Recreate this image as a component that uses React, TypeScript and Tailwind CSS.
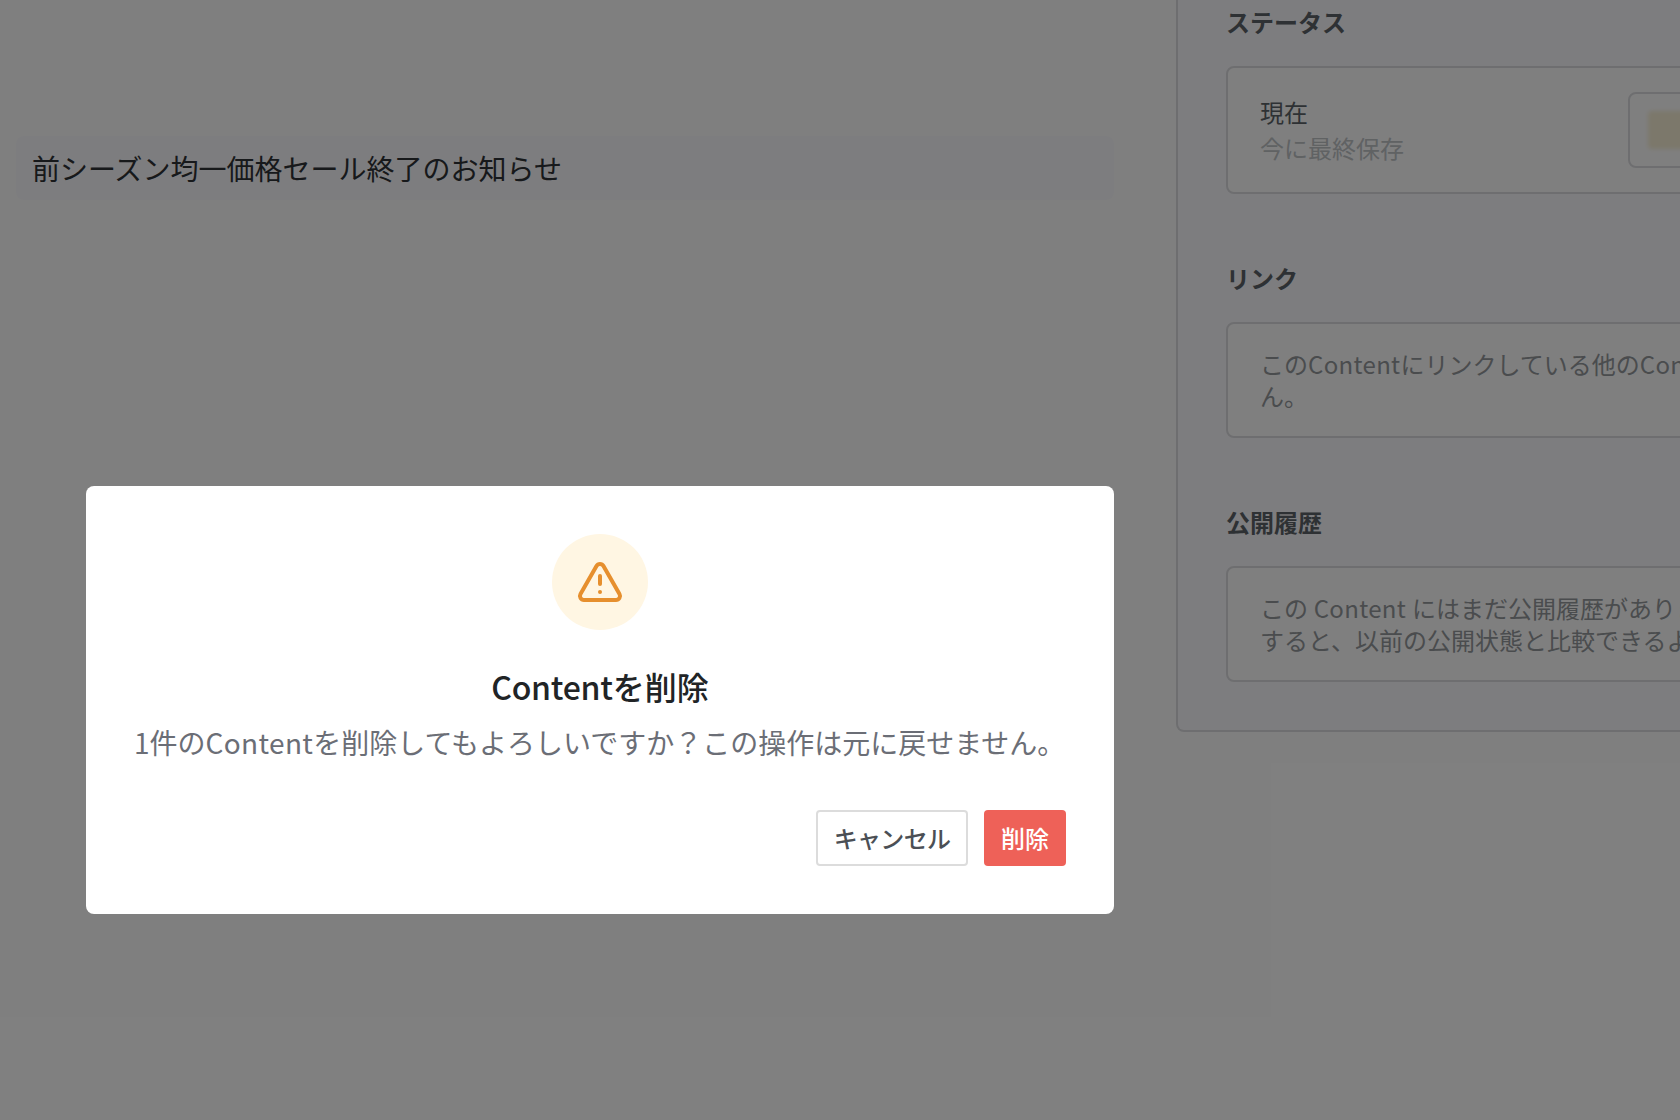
import { TriangleAlert } from 'lucide-react'
import type { ReactNode } from 'react'

type TSection = {
    title: string,
    children: ReactNode
}

function Section({ title, children }: TSection) {
    return (
        <section className="flex flex-col gap-6">
            <h2 className="text-2xl leading-10 font-bold text-[#5c6368]">{title}</h2>
            <div className="rounded-lg border-2 border-[#dcdde0] bg-white px-8 py-6 text-2xl leading-8">
                {children}
            </div>
        </section>
    )
}

function Sidebar() {
    return (
        <aside className="flex w-[760px] shrink-0 flex-col gap-16 self-start rounded-b-lg border-2 border-t-0 border-[#dcdde0] bg-[#fbfbfe] px-12 pt-[2px] pb-12">
            <Section title="ステータス">
                <div className="flex items-center justify-between">
                    <div className="leading-9">
                        <p className="text-[#5c6368]">現在</p>
                        <p className="text-[#c0c4c7]">今に最終保存</p>
                    </div>
                    <div className="flex h-[76px] w-[224px] items-center rounded-lg border-2 border-[#dcdde0] px-[18px]">
                        <span className="h-[38px] w-40 rounded bg-[#f8f0d6] blur-[2px]"></span>
                    </div>
                </div>
            </Section>
            <Section title="リンク">
                <p className="text-[#95999c]">この<span className="tracking-[0.33px]">Content</span>にリンクしている他の<span className="tracking-[0.33px]">Content</span>はありませ<br />ん。</p>
            </Section>
            <Section title="公開履歴">
                <p className="whitespace-nowrap text-[#95999c]">この<span className="tracking-[0.33px]"> Content </span>にはまだ公開履歴がありません。公開<br />すると、以前の公開状態と比較できるようになります。</p>
            </Section>
        </aside>
    )
}

function DeleteDialog() {
    return (
        <div className="absolute top-[486px] left-[86px] flex h-[428px] w-[1028px] flex-col items-center rounded-lg bg-white p-12">
            <div className="flex size-24 items-center justify-center rounded-full bg-[#fff6e3]">
                <TriangleAlert size={48} className="text-[#e68f2e]" />
            </div>
            <h1 className="mt-8 text-[32px] leading-[48px] font-medium text-[#212426]"><span className="tracking-[-0.25px]">Content</span>を削除</h1>
            <p className="mt-2 self-start text-[28px] leading-[48px] whitespace-nowrap text-[#6b6e76]">1件の<span className="tracking-[0.36px]">Content</span>を削除してもよろしいですか？この操作は元に戻せません。</p>
            <div className="mt-auto flex gap-4 self-end text-2xl font-medium">
                <button className="h-14 w-[152px] rounded border-2 border-[#dcdcdc] bg-white tracking-[-0.7px] text-[#4b4f55]">キャンセル</button>
                <button className="h-14 w-[82px] rounded bg-[#ee6158] text-white">削除</button>
            </div>
        </div>
    )
}

export default function App() {
    return (
        <div lang="ja" className="relative h-[1120px] w-[1680px] overflow-hidden bg-white font-['Noto_Sans_CJK_JP',sans-serif]">
            <div className="flex">
                <main className="w-[1176px] shrink-0 pt-[136px] pr-[62px] pl-4">
                    <div className="flex h-16 items-center rounded-lg bg-[#fbfbfe] px-4 text-[28px] text-[#2f3237]">前シーズン均一価格セール終了のお知らせ</div>
                </main>
                <Sidebar />
            </div>
            <div className="absolute inset-0 bg-black/50"></div>
            <DeleteDialog />
        </div>
    )
}
